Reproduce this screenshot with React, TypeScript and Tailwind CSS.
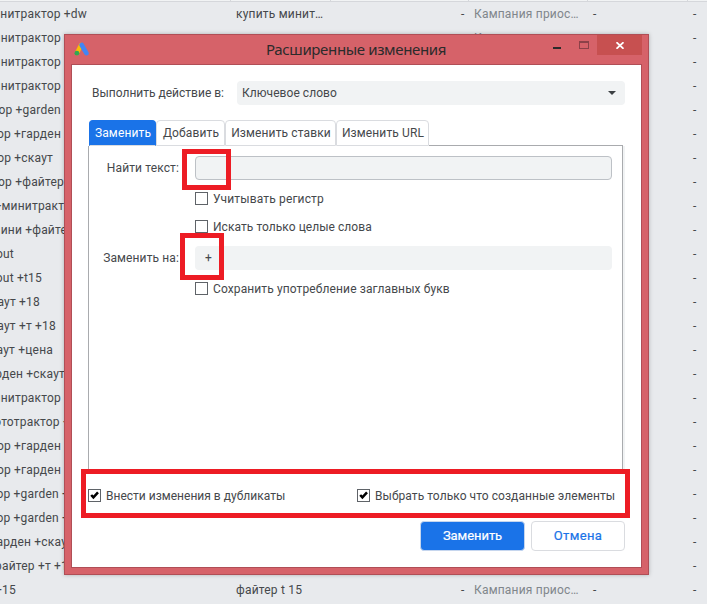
import React, { useState } from 'react';
import clsx from 'clsx';

interface Row {
  keyword: string;
  // right edge of the scrolled keyword cell
  end: number;
  ad?: string;
  status?: string;
}

const PAUSED = 'Кампания приос…';

const rows: Row[] = [
  { keyword: 'минитрактор +dw', end: 87, ad: 'купить минит…', status: PAUSED },
  { keyword: 'минитрактор', end: 61, status: PAUSED },
  { keyword: 'минитрактор', end: 61 },
  { keyword: 'минитрактор', end: 61 },
  { keyword: 'трактор +garden +', end: 71 },
  { keyword: 'трактор +гарден', end: 61 },
  { keyword: 'трактор +скаут', end: 53 },
  { keyword: 'трактор +файтер', end: 64 },
  { keyword: '+минитрактор', end: 78 },
  { keyword: 'мини +файтер', end: 74 },
  { keyword: 'scout', end: 14 },
  { keyword: 'scout +t15', end: 42 },
  { keyword: 'скаут +18', end: 40 },
  { keyword: 'скаут +т +18', end: 56 },
  { keyword: 'скаут +цена', end: 53 },
  { keyword: 'гарден +скаут', end: 65 },
  { keyword: 'минитрактор', end: 61 },
  { keyword: 'мототрактор +', end: 70 },
  { keyword: 'трактор +гарден', end: 61 },
  { keyword: 'трактор +гарден', end: 61 },
  { keyword: 'трактор +garden +', end: 69 },
  { keyword: 'трактор +garden +', end: 69 },
  { keyword: 'гарден +скаут', end: 73 },
  { keyword: 'файтер +т +15', end: 75 },
  { keyword: '+15', end: 16, ad: 'файтер t 15', status: PAUSED },
];

const tabs = [
  { label: 'Заменить', width: 'w-[67px]' },
  { label: 'Добавить', width: 'w-[69px]' },
  { label: 'Изменить ставки', width: 'w-[111px]' },
  { label: 'Изменить URL', width: 'w-[93px]' },
];

const KeywordTable: React.FC = () => (
  <div className="w-[707px] h-[604px] overflow-hidden">
    <div className="h-[2px] flex bg-[#f1f3f4] border-b border-[#d5d7db]">
      <div className="w-[231px] border-r border-[#d5d7db]" />
      <div className="w-[100px] border-r border-[#d5d7db]" />
      <div className="w-[138px] border-r border-[#d5d7db]" />
      <div className="w-[119px] border-r border-[#d5d7db]" />
      <div className="w-[100px] border-r border-[#d5d7db]" />
    </div>
    {rows.map((row, index) => (
      <div key={index} className="h-6 flex items-center leading-6 whitespace-nowrap">
        <div className="w-[236px] shrink-0">
          <div className="flex justify-end" style={{ width: row.end }}>
            <span>{row.keyword}</span>
          </div>
        </div>
        <div className="w-[225px] shrink-0">{row.ad}</div>
        <div className="w-[13px] shrink-0">{row.status && '-'}</div>
        <div className="w-[119px] shrink-0 text-[#80868b]">{row.status}</div>
        <div className="w-[100px] shrink-0">{row.status && '-'}</div>
        <div>-</div>
      </div>
    ))}
  </div>
);

interface CheckProps {
  label: string;
  checked: boolean;
  onChange: () => void;
  className?: string;
}

const Check: React.FC<CheckProps> = ({ label, checked, onChange, className }) => (
  <label className={clsx('flex items-center gap-[5px] h-[13px] whitespace-nowrap', className)}>
    <input type="checkbox" className="sr-only" checked={checked} onChange={onChange} />
    <span className="w-[13px] h-[13px] shrink-0 border border-[#5f6368] bg-white">
      {checked && (
        <svg viewBox="0 0 11 11" className="w-[11px] h-[11px]" fill="none" stroke="#000" strokeWidth="2.5">
          <path d="M2.2 5 L4.4 7.4 L9 2.4" />
        </svg>
      )}
    </span>
    <span>{label}</span>
  </label>
);

const AdsLogo: React.FC = () => (
  <svg viewBox="0 0 16 15" className="w-4 h-[15px]">
    <path d="M7 3 L3 11" stroke="#fbbc04" strokeWidth="4.4" strokeLinecap="round" />
    <path d="M7.7 3 L12.4 11.2" stroke="#4285f4" strokeWidth="4.6" strokeLinecap="round" />
    <circle cx="2.9" cy="11.2" r="2.4" fill="#34a853" />
  </svg>
);

const TitleBar: React.FC = () => (
  <div className="h-[29px] flex">
    <div className="w-[195px] shrink-0 pl-[3px] pt-[7px]">
      <AdsLogo />
    </div>
    <h1 className="w-[287px] shrink-0 font-['Noto_Sans'] text-[15px] leading-[29px] tracking-[-0.36px] text-[#2b2b2b] whitespace-nowrap">
      Расширенные изменения
    </h1>
    <div className="w-[8px] h-[2px] mt-[12px] bg-[#2b2b2b]" />
    <div className="w-[10px] h-[8px] mt-[6px] ml-[18px] border border-t-2 border-[#8c4148]" />
    <button className="w-[45px] h-[20px] ml-[8px] flex items-center justify-center bg-[#c75050]">
      <svg viewBox="0 0 8 7" className="w-2 h-[7px] ml-[1px] mt-[1px]" stroke="#fff" strokeWidth="1.7">
        <path d="M0.5 0.2 L7.5 6.8 M7.5 0.2 L0.5 6.8" />
      </svg>
    </button>
  </div>
);

const ChangesDialog: React.FC = () => {
  const [activeTab, setActiveTab] = useState(0);
  const [find, setFind] = useState('');
  const [replace, setReplace] = useState('+');
  const [options, setOptions] = useState({
    matchCase: false,
    wholeWords: false,
    keepCaps: false,
    duplicates: true,
    selectNew: true,
  });

  const toggle = (key: keyof typeof options) => () => {
    setOptions(prev => ({ ...prev, [key]: !prev[key] }));
  };

  return (
    <div className="absolute left-16 top-[34px] w-[585px] h-[541px] border border-[#b04e56] bg-[#d66269] px-[6px] shadow-[0_0_4px_rgba(0,0,0,0.25)]">
      <TitleBar />
      <div className="h-[504px] border border-[#b04e56] bg-white px-4 pt-4">
        <div className="flex items-center h-6 pl-1">
          <span className="w-[145px] tracking-normal whitespace-nowrap">Выполнить действие в:</span>
          <div className="w-[388px] h-6 flex items-center justify-between rounded bg-[#f1f3f4] pl-[5px] pr-[9px]">
            <span className="tracking-[0.05px]">Ключевое слово</span>
            <svg viewBox="0 0 8 4" className="w-2 h-1" fill="#3c4043">
              <path d="M0 0 H8 L4 4 Z" />
            </svg>
          </div>
        </div>

        <div className="mt-[15px] ml-px flex h-[26px] items-end">
          {tabs.map((tab, index) => (
            <button
              key={tab.label}
              onClick={() => setActiveTab(index)}
              className={clsx(
                'h-[26px] shrink-0 pb-[1px] pl-px border rounded-t tracking-[0.13px] whitespace-nowrap',
                tab.width,
                index === activeTab
                  ? 'bg-[#1a73e8] border-[#1a73e8] border-b-[#dadce0] text-white'
                  : 'bg-white border-[#dadce0]'
              )}
            >
              {tab.label}
            </button>
          ))}
          <div className="w-[194px] h-px bg-[#a9abae]" />
        </div>

        {/* Tab content */}
        <div className="w-[537px] h-[325px] border-r-2 border-[#f1f3f4]">
          <div className="w-[535px] h-[325px] border-x border-[#a9abae] pt-[10px]">
            <div className="flex items-center h-6">
              <span className="w-[90px] text-right tracking-[0.12px] whitespace-nowrap">Найти текст:</span>
              <input
                value={find}
                onChange={e => setFind(e.target.value)}
                className="ml-[16px] w-[417px] h-6 rounded border border-[#bdc1c6] bg-[#f1f3f4] px-3 outline-none"
              />
            </div>
            <Check label="Учитывать регистр" checked={options.matchCase} onChange={toggle('matchCase')} className="ml-[106px] mt-3 tracking-[0.15px]" />
            <Check label="Искать только целые слова" checked={options.wholeWords} onChange={toggle('wholeWords')} className="ml-[106px] mt-[15px] tracking-[0.05px]" />
            <div className="flex items-center h-6 mt-[13px]">
              <span className="w-[90px] text-right tracking-[0.12px] whitespace-nowrap">Заменить на:</span>
              <input
                value={replace}
                onChange={e => setReplace(e.target.value)}
                className="ml-[16px] w-[417px] h-6 rounded bg-[#f1f3f4] px-[10px] outline-none"
              />
            </div>
            <Check label="Сохранить употребление заглавных букв" checked={options.keepCaps} onChange={toggle('keepCaps')} className="ml-[106px] mt-3 tracking-[0.11px]" />
          </div>
        </div>

        <div className="flex mt-[18px]">
          <Check label="Внести изменения в дубликаты" checked={options.duplicates} onChange={toggle('duplicates')} className="w-[269px] tracking-[0.01px]" />
          <Check label="Выбрать только что созданные элементы" checked={options.selectNew} onChange={toggle('selectNew')} className="tracking-[0.06px]" />
        </div>

        <div className="flex justify-end gap-[6px] mt-[19px] text-[13px] [-webkit-text-stroke:0.2px]">
          <button className="w-[105px] h-[30px] rounded border border-[#c6d6ee] bg-[#1a73e8] text-white tracking-[-0.05px]">Заменить</button>
          <button className="w-[94px] h-[30px] rounded border border-[#dadce0] bg-white text-[#1a73e8] tracking-[0.35px]">Отмена</button>
        </div>
      </div>
    </div>
  );
};

const Highlights: React.FC = () => (
  <>
    <div className="pointer-events-none absolute left-[182px] top-[149px] w-[49px] h-[41px] border-[5px] border-[#ed1c24]" />
    <div className="pointer-events-none absolute left-[180px] top-[233px] w-[44px] h-[47px] border-[5px] border-[#ed1c24]" />
    <div className="pointer-events-none absolute left-[81px] top-[469px] w-[549px] h-[49px] border-[5px] border-[#ed1c24]" />
  </>
);

export default function App() {
  return (
    <div className="relative w-[707px] h-[604px] overflow-hidden bg-[#e8eaed] font-[Roboto,sans-serif] text-[12px] tracking-[0.2px] text-[#45484b]">
      <KeywordTable />
      <ChangesDialog />
      <Highlights />
    </div>
  );
}
